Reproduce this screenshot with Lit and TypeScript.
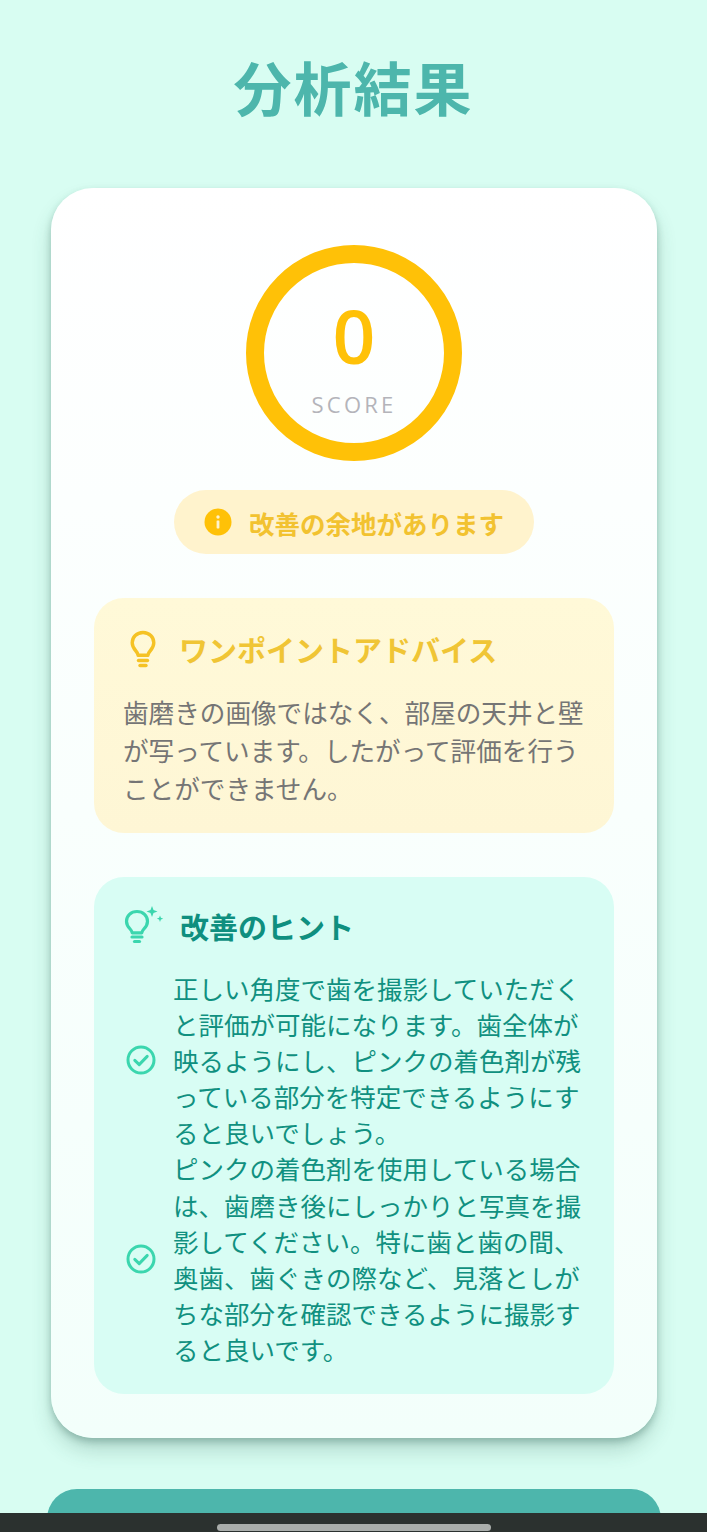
import { LitElement, html, css } from "lit";
import { customElement } from "lit/decorators.js";

const checkIcon = html`<svg class="check" viewBox="0 0 30 30" fill="none" stroke="#3bd6ae" stroke-width="3" stroke-linecap="round" stroke-linejoin="round"><circle cx="15" cy="15" r="13"/><path d="M8.800 15.400l4.400 4.200 8-8.200"/></svg>`;

@customElement("app-root")
export class AppRoot extends LitElement {
  static styles = css`
    :host {
      display: block;
      position: relative;
      width: 707px;
      height: 1532px;
      overflow: hidden;
      background: #d8fdf2;
      font-family: "Noto Sans CJK JP", "Noto Sans", sans-serif;
    }
    .page {
      display: flex;
      flex-direction: column;
      align-items: center;
      padding-top: 41px;
    }
    h1 {
      margin: 0;
      height: 91px;
      line-height: 91px;
      font-size: 58px;
      font-weight: 700;
      letter-spacing: 2px;
      color: #4db6ac;
    }
    .card {
      box-sizing: border-box;
      width: 606px;
      height: 1250px;
      margin-top: 56px;
      margin-left: 1px;
      padding: 57px 43px 44px;
      border-radius: 42px;
      background: linear-gradient(180deg, #ffffff 0%, #f3fffb 100%);
      box-shadow: 0 4px 7px rgba(40, 90, 75, 0.3), 0 13px 20px rgba(40, 90, 75, 0.2);
      display: flex;
      flex-direction: column;
      align-items: center;
    }
    .ring {
      box-sizing: border-box;
      width: 216px;
      height: 216px;
      border: 18px solid #ffc107;
      border-radius: 50%;
      display: flex;
      flex-direction: column;
      align-items: center;
      font-family: "Open Sans", sans-serif;
    }
    .num {
      margin-top: 20px;
      height: 105px;
      line-height: 105px;
      font-size: 75px;
      font-weight: 600;
      color: #ffc107;
    }
    .lbl {
      height: 32px;
      line-height: 32px;
      font-size: 22px;
      letter-spacing: 3.2px;
      color: #b4b4ba;
    }
    .pill {
      box-sizing: border-box;
      width: 360px;
      height: 64px;
      margin-top: 29px;
      border-radius: 32px;
      background: #fff3cd;
      display: flex;
      align-items: center;
      justify-content: center;
      gap: 17px;
      font-size: 25.5px;
      font-weight: 700;
      color: #f2c230;
    }
    .pill svg { width: 28px; height: 28px; flex: none; }
    .box {
      box-sizing: border-box;
      width: 520px;
      border-radius: 30px;
    }
    .advice {
      height: 235px;
      margin-top: 44px;
      padding: 28px 30px 0 30px;
      background: linear-gradient(180deg, #fff9d8 0%, #fef6d5 100%);
    }
    .head {
      display: flex;
      align-items: center;
      gap: 17px;
      height: 46px;
      font-size: 29px;
      font-weight: 700;
    }
    .advice .head { color: #f0c535; }
    .advice .head svg { width: 38px; height: 42px; flex: none; }
    .advice p {
      margin: 21px 0 0 -1px;
      font-size: 25.6px;
      line-height: 38px;
      color: #757575;
    }
    .hints {
      height: 517px;
      margin-top: 44px;
      padding: 26px 30px 0;
      background: #d8fdf4;
    }
    .hints .head { color: #0f8f7f; gap: 14px; }
    .hints .head svg { width: 42px; height: 42px; flex: none; }
    .rows {
      margin-top: 21px;
      display: flex;
      flex-direction: column;
    }
    .row {
      display: flex;
      align-items: center;
      gap: 17px;
    }
    .check { width: 30px; height: 30px; flex: none; margin-left: 2px; }
    .row p {
      margin: 0;
      flex: 1;
      font-size: 25.5px;
      line-height: 36.1px;
      color: #109080;
    }
    .cta {
      width: 614px;
      height: 60px;
      margin-top: 51px;
      border-radius: 42px;
      background: #4db6ac;
      flex: none;
    }
    .nav {
      position: absolute;
      left: 0;
      right: 0;
      bottom: 0;
      height: 19px;
      background: #2b312f;
      display: flex;
      justify-content: center;
      align-items: flex-end;
    }
    .nav i {
      display: block;
      width: 274px;
      height: 7px;
      margin-bottom: 1px;
      border-radius: 4px;
      background: #a9adab;
    }
  `;

  render() {
    return html`
      <div class="page">
        <h1>分析結果</h1>
        <section class="card">
          <div class="ring">
            <div class="num">0</div>
            <div class="lbl">SCORE</div>
          </div>
          <div class="pill">
            <svg viewBox="0 0 28 28"><circle cx="14" cy="14" r="13.5" fill="#ffc107"/><rect x="12.6" y="12.4" width="2.8" height="8" rx="0.6" fill="#fff3cd"/><circle cx="14" cy="9" r="1.7" fill="#fff3cd"/></svg>
            <span>改善の余地があります</span>
          </div>
          <div class="box advice">
            <div class="head">
              <svg viewBox="0 0 38 42" fill="none" stroke="#f5c224" stroke-width="3.400" stroke-linecap="round" stroke-linejoin="round"><path d="M19 4.500c-6.300 0-10.800 4.700-10.800 10.300 0 3.800 1.900 6.200 3.700 8.200 1.300 1.400 2 2.600 2.200 4.300h9.800c.2-1.700.9-2.900 2.200-4.300 1.800-2 3.700-4.400 3.700-8.200 0-5.600-4.500-10.300-10.800-10.300z"/><path d="M14.500 32.500h9"/><path d="M16 37.500h6"/></svg>
              <span>ワンポイントアドバイス</span>
            </div>
            <p>歯磨きの画像ではなく、部屋の天井と壁が写っています。したがって評価を行うことができません。</p>
          </div>
          <div class="box hints">
            <div class="head">
              <svg viewBox="0 0 42 42" fill="none"><g stroke="#3bd6ae" stroke-width="3.200" stroke-linecap="round" stroke-linejoin="round"><path d="M13 6.500C6.900 6.500 2.500 10.900 2.500 16.200c0 3.600 1.800 5.900 3.600 7.800 1.200 1.300 1.900 2.300 2.100 3.800h9.600c.2-1.500.9-2.500 2.100-3.800 1.800-1.900 3.600-4.200 3.600-7.800 0-5.300-4.400-9.700-10.500-9.700z"/><path d="M8 32h10"/><path d="M10.500 36.500h5"/></g><path d="M28 1l1.500 3.900L33.500 6.500l-4 1.500L28 12l-1.500-4-4-1.500 4-1.600z" fill="#3bd6ae"/><path d="M36 10.500l.9 2.300 2.300.9-2.300.9-.9 2.300-.9-2.300-2.300-.9 2.300-.9z" fill="#3bd6ae"/></svg>
              <span>改善のヒント</span>
            </div>
            <div class="rows">
              <div class="row">${checkIcon}<p>正しい角度で歯を撮影していただくと評価が可能になります。歯全体が映るようにし、ピンクの着色剤が残っている部分を特定できるようにすると良いでしょう。</p></div>
              <div class="row">${checkIcon}<p>ピンクの着色剤を使用している場合は、歯磨き後にしっかりと写真を撮影してください。特に歯と歯の間、奥歯、歯ぐきの際など、見落としがちな部分を確認できるように撮影すると良いです。</p></div>
            </div>
          </div>
        </section>
        <div class="cta"></div>
      </div>
      <div class="nav"><i></i></div>
    `;
  }
}
